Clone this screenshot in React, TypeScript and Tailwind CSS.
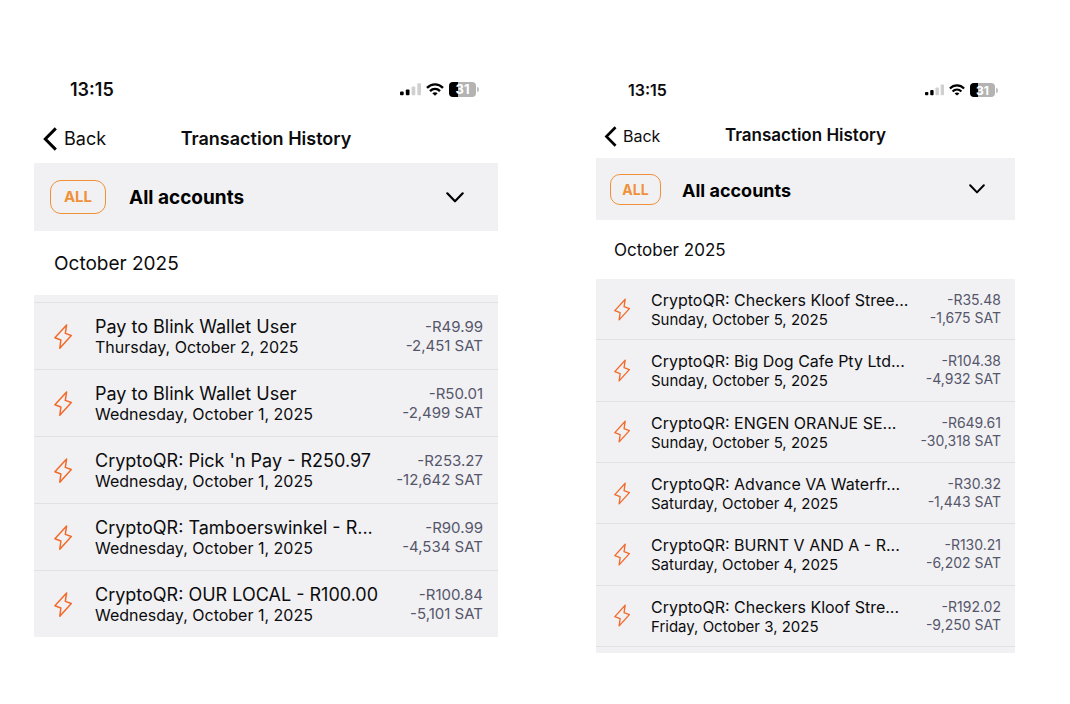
import React from "react";
import { clsx } from "clsx";

interface Transaction {
  title: string;
  date: string;
  amount: string;
  sats: string;
}

interface ScreenStyles {
  status: string;
  clock: string;
  statusIcons: string;
  signal: string;
  wifi: string;
  battery: string;
  header: string;
  backIcon: string;
  back: string;
  heading: string;
  account: string;
  badge: string;
  accountName: string;
  chevron: string;
  month: string;
  list: string;
  row: string;
  bolt: string;
  title: string;
  date: string;
  amount: string;
}

interface TransactionScreenProps {
  transactions: Transaction[];
  styles: ScreenStyles;
  // edge of the neighbouring row when the list is scrolled
  peekTop?: boolean;
  peekBottom?: boolean;
}

const large: ScreenStyles = {
  status: "h-[50px] pl-9 pr-[19px]",
  clock: "text-[18px]",
  statusIcons: "gap-[5px]",
  signal: "w-[21px] h-[13px]",
  wifi: "w-[18px] h-[13px]",
  battery: "w-[27px] h-[15px] text-[13px] rounded-[4px]",
  header: "h-[49px] px-[9px]",
  backIcon: "w-[14px] h-[24px]",
  back: "gap-[7px] text-[18px]",
  heading: "text-[18px]",
  account: "h-[68px] pl-4 pr-[34px]",
  badge: "w-14 h-[34px] mr-[23px] rounded-[11px] text-[15px]",
  accountName: "text-[19px]",
  chevron: "w-[18px] h-[11px]",
  month: "h-16 pl-5 pt-0.5 text-[19px]",
  list: "min-h-[335px]",
  row: "pl-5 pr-[15px]",
  bolt: "w-[18px] h-[25px] mr-[23px]",
  title: "text-[18px] leading-[21px]",
  date: "text-[16px] leading-[21px]",
  amount: "text-[15px] leading-[19px]",
};

const small: ScreenStyles = {
  status: "h-[52px] pl-8 pr-[17px]",
  clock: "text-[16px]",
  statusIcons: "gap-[5px]",
  signal: "w-[19px] h-[12px]",
  wifi: "w-[16px] h-[12px]",
  battery: "w-[25px] h-[14px] text-[12px] rounded-[4px]",
  header: "h-[42px] px-2 pb-0.5",
  backIcon: "w-[13px] h-[21px]",
  back: "gap-[6px] text-[16px]",
  heading: "text-[17px]",
  account: "h-[62px] pl-[14px] pr-[30px]",
  badge: "w-[51px] h-[31px] mr-[21px] rounded-[10px] text-[14px]",
  accountName: "text-[18px]",
  chevron: "w-[16px] h-[10px]",
  month: "h-[59px] pl-[18px] pt-0.5 text-[17px]",
  list: "min-h-[368px]",
  row: "pl-[18px] pr-[14px]",
  bolt: "w-[16px] h-[23px] mr-[21px]",
  title: "text-[16px] leading-[20px]",
  date: "text-[15px] leading-[20px]",
  amount: "text-[14px] leading-[18px]",
};

const earlyOctober: Transaction[] = [
  { title: "Pay to Blink Wallet User", date: "Thursday, October 2, 2025", amount: "-R49.99", sats: "-2,451 SAT" },
  { title: "Pay to Blink Wallet User", date: "Wednesday, October 1, 2025", amount: "-R50.01", sats: "-2,499 SAT" },
  { title: "CryptoQR: Pick 'n Pay - R250.97", date: "Wednesday, October 1, 2025", amount: "-R253.27", sats: "-12,642 SAT" },
  { title: "CryptoQR: Tamboerswinkel - R...", date: "Wednesday, October 1, 2025", amount: "-R90.99", sats: "-4,534 SAT" },
  { title: "CryptoQR: OUR LOCAL - R100.00", date: "Wednesday, October 1, 2025", amount: "-R100.84", sats: "-5,101 SAT" },
];

const lateOctober: Transaction[] = [
  { title: "CryptoQR: Checkers Kloof Stree...", date: "Sunday, October 5, 2025", amount: "-R35.48", sats: "-1,675 SAT" },
  { title: "CryptoQR: Big Dog Cafe Pty Ltd...", date: "Sunday, October 5, 2025", amount: "-R104.38", sats: "-4,932 SAT" },
  { title: "CryptoQR: ENGEN ORANJE SE...", date: "Sunday, October 5, 2025", amount: "-R649.61", sats: "-30,318 SAT" },
  { title: "CryptoQR: Advance VA Waterfr...", date: "Saturday, October 4, 2025", amount: "-R30.32", sats: "-1,443 SAT" },
  { title: "CryptoQR: BURNT V AND A - R...", date: "Saturday, October 4, 2025", amount: "-R130.21", sats: "-6,202 SAT" },
  { title: "CryptoQR: Checkers Kloof Stre...", date: "Friday, October 3, 2025", amount: "-R192.02", sats: "-9,250 SAT" },
];

const SignalIcon = ({ className }: { className: string }) => (
  <svg viewBox="0 0 21 13" className={className} aria-hidden="true">
    <rect x="0" y="8.6" width="3.7" height="3.7" rx="1" fill="#000" />
    <rect x="5.8" y="6.6" width="3.7" height="5.7" rx="1" fill="#000" />
    <rect x="11.6" y="3.6" width="3.7" height="8.7" rx="1" fill="#d0d0d0" />
    <rect x="17.3" y="0.3" width="3.7" height="12" rx="1" fill="#d0d0d0" />
  </svg>
);

const WifiIcon = ({ className }: { className: string }) => (
  <svg viewBox="0 0 18 13" className={className} fill="none" stroke="#000" strokeWidth="2.4" aria-hidden="true">
    <path d="M1 4.8C5.6.2 12.4.2 17 4.8" />
    <path d="M4 8.1c2.9-2.8 7.1-2.8 10 0" />
    <path d="M9 12.8 6.3 10.3c1.6-1.4 3.8-1.4 5.4 0Z" fill="#000" stroke="none" />
  </svg>
);

const BoltIcon = ({ className }: { className: string }) => (
  <svg
    viewBox="0 0 18 25"
    className={clsx("shrink-0", className)}
    fill="none"
    stroke="#f26a2a"
    strokeWidth="1.5"
    strokeLinejoin="round"
    aria-hidden="true"
  >
    <path d="M12.6.9.9 13.8 6.9 16 5.8 24.2 17.3 11.5 11.3 9.4Z" />
  </svg>
);

const TransactionScreen: React.FC<TransactionScreenProps> = ({
  transactions,
  styles,
  peekTop,
  peekBottom,
}) => {
  return (
    <section className="min-w-0">
      <div className={clsx("flex items-center justify-between", styles.status)}>
        <span className={clsx("font-semibold", styles.clock)}>13:15</span>
        <div className={clsx("flex items-center", styles.statusIcons)}>
          <SignalIcon className={styles.signal} />
          <WifiIcon className={styles.wifi} />
          <div className="flex items-center gap-px">
            <span
              className={clsx(
                "flex items-center justify-center pt-px leading-none font-bold text-white bg-linear-to-r from-black from-33% to-[#b3b3b3] to-33%",
                styles.battery
              )}
            >
              31
            </span>
            <span className="w-[2px] h-[5px] rounded-r-full bg-[#c0c0c0]" />
          </div>
        </div>
      </div>

      <header className={clsx("grid grid-cols-[1fr_auto_1fr] items-center", styles.header)}>
        <button type="button" className={clsx("flex items-center", styles.back)}>
          <svg
            viewBox="0 0 14 24"
            className={styles.backIcon}
            fill="none"
            stroke="#000"
            strokeWidth="3"
            aria-hidden="true"
          >
            <path d="M12.8 1.4 2.3 12l10.5 10.6" />
          </svg>
          Back
        </button>
        <h2 className={clsx("font-semibold", styles.heading)}>Transaction History</h2>
      </header>

      <button
        type="button"
        className={clsx("flex items-center w-full bg-[#f1f1f3]", styles.account)}
      >
        <span
          className={clsx(
            "flex items-center justify-center border border-[#f0913a] font-bold text-[#f0913a]",
            styles.badge
          )}
        >
          ALL
        </span>
        <span className={clsx("pt-0.5 font-bold text-black", styles.accountName)}>
          All accounts
        </span>
        <svg
          viewBox="0 0 18 11"
          className={clsx("ml-auto", styles.chevron)}
          fill="none"
          stroke="#000"
          strokeWidth="2.2"
          strokeLinecap="round"
          strokeLinejoin="round"
          aria-hidden="true"
        >
          <path d="m1.3 1.3 7.7 8 7.7-8" />
        </svg>
      </button>

      <h3 className={clsx("flex items-center", styles.month)}>October 2025</h3>

      {peekTop && <div className="h-[7px] bg-[#f1f1f3]" />}
      <ul className={clsx("grid auto-rows-fr bg-[#f1f1f3]", styles.list)}>
        {transactions.map((tx, i) => (
          <li
            key={i}
            className={clsx(
              "flex items-center border-[#e1e1e4]",
              peekTop ? "border-t" : "border-b",
              styles.row
            )}
          >
            <BoltIcon className={styles.bolt} />
            <div className="min-w-0 pt-0.5 whitespace-nowrap">
              <p className={styles.title}>{tx.title}</p>
              <p className={styles.date}>{tx.date}</p>
            </div>
            <div
              className={clsx(
                "ml-auto text-right whitespace-nowrap text-[#56566b]",
                styles.amount
              )}
            >
              <p>{tx.amount}</p>
              <p>{tx.sats}</p>
            </div>
          </li>
        ))}
      </ul>
      {peekBottom && <div className="h-[6px] bg-[#f1f1f3]" />}
    </section>
  );
};

const App: React.FC = () => {
  return (
    <main className="min-h-screen bg-white pt-16 pl-[34px] pr-[55px] grid grid-cols-[464fr_419fr] items-start gap-[98px] font-['Inter','Liberation_Sans',sans-serif] text-[#0c0c0e]">
      <TransactionScreen transactions={earlyOctober} styles={large} peekTop />
      <TransactionScreen transactions={lateOctober} styles={small} peekBottom />
    </main>
  );
};

export default App;
